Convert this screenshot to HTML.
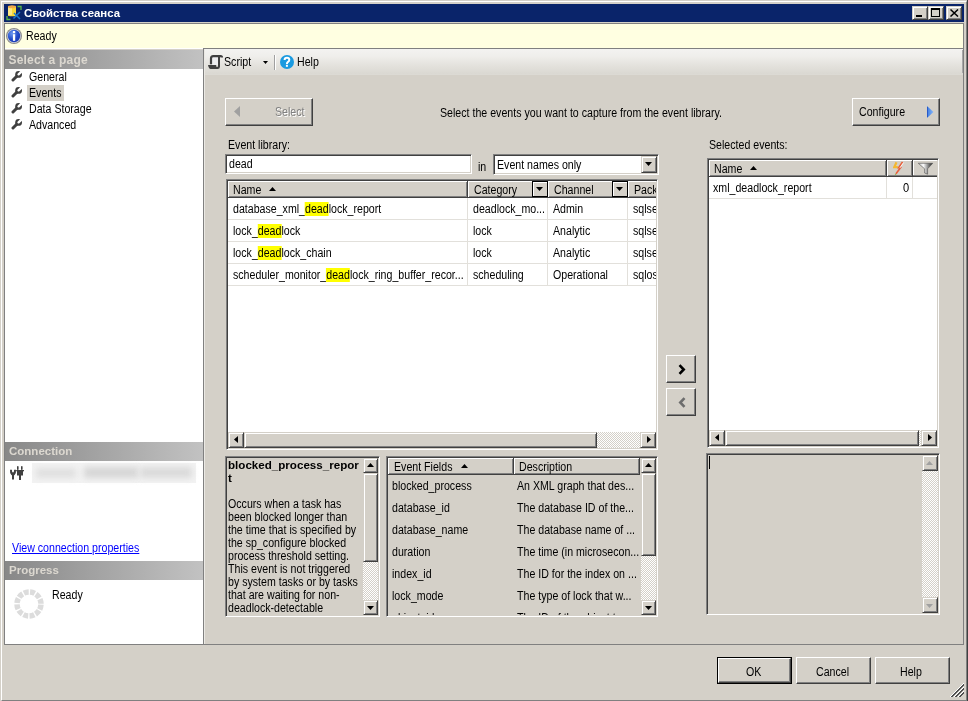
<!DOCTYPE html>
<html><head><meta charset="utf-8">
<style>
*{margin:0;padding:0;box-sizing:border-box}
html,body{width:968px;height:701px;overflow:hidden;background:#d4d0c8;font-family:"Liberation Sans",sans-serif;font-size:10.6px;color:#000}
.a{position:absolute}
.t{position:absolute;white-space:nowrap;line-height:13px;font-size:12px;transform:translate(-1px,1px) scaleX(0.885);transform-origin:0 0}
.nt{transform:none}
.raised{position:absolute;background:#d4d0c8;border:1px solid;border-color:#fff #404040 #404040 #fff;box-shadow:inset -1px -1px #808080}
.raised2{position:absolute;background:#d4d0c8;border:1px solid;border-color:#d4d0c8 #404040 #404040 #d4d0c8;box-shadow:inset 1px 1px #fff,inset -1px -1px #808080}
.sunken{position:absolute;border:1px solid;border-color:#808080 #fff #fff #808080;box-shadow:inset 1px 1px #404040,inset -1px -1px #d4d0c8}
.hdr{position:absolute;background:linear-gradient(to right,#888888,#c2c2c2);color:#dcd8d0;font-weight:bold;font-size:11px;line-height:18px;padding-left:4px;white-space:nowrap}
.checker{background-color:#d4d0c8;background-image:repeating-conic-gradient(#fff 0 25%,#d4d0c8 0 50%);background-size:2px 2px}
.hc{position:absolute;background:#d4d0c8;border-right:1px solid #404040;border-bottom:1px solid #404040;box-shadow:inset 1px 1px #fff,inset -1px -1px #808080}
.yl{background:#ffff00}
</style></head><body><div class="a" style="left:0;top:0;width:968px;height:701px;will-change:transform;overflow:hidden">
<!-- window frame -->
<div class="a" style="left:1px;top:1px;width:966px;height:700px;border-left:1px solid #fff;border-top:1px solid #fff;border-right:1px solid #808080;border-bottom:1px solid #808080"></div>
<div class="a" style="left:967px;top:0;width:1px;height:701px;background:#404040"></div>

<!-- title bar -->
<div class="a" style="left:4px;top:4px;width:960px;height:18px;background:#0a246a"></div>
<svg class="a" style="left:6px;top:5px" width="16" height="16" viewBox="0 0 16 16">
  <path d="M1 11v3.5h3.5M11.5 1.5h3.5v3.5" stroke="#5cb848" stroke-width="1.3" fill="none"/>
  <rect x="2" y="1.5" width="8" height="9" fill="#f8d838"/>
  <rect x="2" y="1.5" width="4" height="9" fill="#fce888"/>
  <ellipse cx="6" cy="1.8" rx="4" ry="1.5" fill="#f0a848"/>
  <ellipse cx="6" cy="10.5" rx="4" ry="0.8" fill="#f8d838"/>
  <path d="M7.5 13.5l6.5-6.5M8 8l6 6" stroke="#1a78d0" stroke-width="1.5"/>
</svg>
<div class="t nt" style="left:24px;top:7px;color:#fff;font-weight:bold;font-size:11.4px">Свойства сеанса</div>
<div class="raised2" style="left:912px;top:6px;width:16px;height:14px"><div class="a" style="left:3px;top:8px;width:6px;height:2px;background:#000"></div></div>
<div class="raised2" style="left:928px;top:6px;width:16px;height:14px"><div class="a" style="left:2px;top:1px;width:9px;height:9px;border:1px solid #000;border-top-width:2px"></div></div>
<div class="raised2" style="left:946px;top:6px;width:16px;height:14px"><svg class="a" style="left:3px;top:2px" width="9" height="8" viewBox="0 0 9 8"><path d="M0.5 0.5L8 7.5M8 0.5L0.5 7.5" stroke="#000" stroke-width="1.5"/></svg></div>

<!-- info bar -->
<div class="a" style="left:4px;top:23px;width:960px;height:26px;background:#ffffe1;border:1px solid #808080"></div>
<svg class="a" style="left:6px;top:28px" width="16" height="16" viewBox="0 0 16 16">
  <defs><radialGradient id="ig" cx="0.35" cy="0.3" r="0.8"><stop offset="0" stop-color="#6a98f0"/><stop offset="0.6" stop-color="#1f48c8"/><stop offset="1" stop-color="#1838b0"/></radialGradient></defs>
  <circle cx="8" cy="8" r="8" fill="#8a8a8a"/>
  <circle cx="8" cy="8" r="6.9" fill="#d0d4e0"/>
  <circle cx="8" cy="8" r="6.2" fill="url(#ig)"/>
  <rect x="6.9" y="6.2" width="2.3" height="6.6" fill="#fff"/>
  <rect x="6.9" y="3" width="2.3" height="2.2" fill="#fff"/>
</svg>
<div class="t" style="left:27px;top:29px">Ready</div>

<!-- LEFT PANEL -->
<div class="a" style="left:4px;top:48px;width:200px;height:597px;background:#fff;border-left:1px solid #808080;border-right:1px solid #808080;border-bottom:1px solid #808080"></div>
<div class="a" style="left:5px;top:49px;width:198px;height:1px;background:#d4d0c8"></div>
<div class="hdr" style="left:5px;top:50px;width:198px;height:19px;line-height:19px;font-size:12px;letter-spacing:0.2px;padding-left:3.5px;padding-top:1px;line-height:18px">Select a page</div>
<svg width="0" height="0" style="position:absolute"><defs>
<g id="wr"><path d="M2 9L6.5 4.5" stroke="#404040" stroke-width="3" stroke-linecap="round"/><circle cx="7.6" cy="3.4" r="3.4" fill="#404040"/><path d="M7.6 3.4L11.5 -0.5" stroke="#fff" stroke-width="2.3" stroke-linecap="round"/></g>
</defs></svg>
<svg class="a" style="left:11px;top:71px" width="11" height="11" viewBox="0 0 11 11"><use href="#wr"/></svg>
<svg class="a" style="left:11px;top:87px" width="11" height="11" viewBox="0 0 11 11"><use href="#wr"/></svg>
<svg class="a" style="left:11px;top:103px" width="11" height="11" viewBox="0 0 11 11"><use href="#wr"/></svg>
<svg class="a" style="left:11px;top:119px" width="11" height="11" viewBox="0 0 11 11"><use href="#wr"/></svg>
<div class="t" style="left:30px;top:70px">General</div>
<div class="a" style="left:27px;top:85px;width:37px;height:16px;background:#d4d0c8"></div>
<div class="t" style="left:30px;top:86px">Events</div>
<div class="t" style="left:30px;top:102px">Data Storage</div>
<div class="t" style="left:30px;top:118px">Advanced</div>

<!-- connection -->
<div class="hdr" style="left:5px;top:442px;width:198px;height:19px;line-height:19px;font-size:11.5px">Connection</div>
<svg class="a" style="left:6px;top:460px" width="24" height="24" viewBox="0 0 24 24" fill="#404040">
  <path d="M4 9.8L5.9 9.8L6.2 12.2H7.8L8.1 9.8L10 9.8Q10.4 13.5 8.6 15Q7 16.2 5.4 15Q3.6 13.5 4 9.8Z"/>
  <rect x="6" y="15" width="2" height="4.5"/>
  <rect x="11" y="6" width="1.6" height="4" rx="0.8"/>
  <rect x="15" y="6" width="1.6" height="4" rx="0.8"/>
  <rect x="10.2" y="10" width="7.8" height="1.3"/>
  <rect x="11" y="10" width="6" height="5.5"/>
  <rect x="13" y="15" width="2" height="5"/>
</svg>
<div class="a" style="left:32px;top:463px;width:164px;height:20px;background:#f3f3f3"></div>
<div class="a" style="left:36px;top:468px;width:40px;height:10px;background:#e0e0e0;filter:blur(3px)"></div>
<div class="a" style="left:84px;top:467px;width:54px;height:11px;background:#d6d6d6;filter:blur(3px)"></div>
<div class="a" style="left:140px;top:467px;width:52px;height:11px;background:#dadada;filter:blur(3px)"></div>
<div class="t" style="left:13px;top:541px;color:#0000ff;text-decoration:underline">View connection properties</div>

<!-- progress -->
<div class="hdr" style="left:5px;top:561px;width:198px;height:19px;line-height:19px;font-size:11.5px">Progress</div>
<svg class="a" style="left:14px;top:589px" width="30" height="30" viewBox="-15 -15 30 30">
  <g stroke="#dcdcdc" stroke-width="5.5" stroke-dasharray="4.9 1.383" fill="none"><circle r="12" transform="rotate(3.3)"/></g>
</svg>
<div class="t" style="left:53px;top:588px">Ready</div>

<!-- MAIN PANEL -->
<div class="a" style="left:203px;top:48px;width:761px;height:597px;border-left:1px solid #808080;border-right:1px solid #808080;border-bottom:1px solid #808080"></div>
<div class="a" style="left:204px;top:49px;width:759px;height:25px;background:linear-gradient(to bottom,#f3f3f1 0%,#efeeeb 30%,#e4e2dd 65%,#dad8d2 100%)"></div><div class="a" style="left:204px;top:74px;width:759px;height:1px;background:#dcdad4"></div><div class="a" style="left:962px;top:50px;width:1px;height:23px;background:#a8a8a8"></div>
<div class="a" style="left:204px;top:49px;width:1px;height:595px;background:#ebe9e4"></div>

<!-- toolbar -->
<svg class="a" style="left:208px;top:54px" width="16" height="16" viewBox="0 0 16 16">
  <rect x="4" y="3" width="6" height="8" fill="#eeeef0"/>
  <path d="M3 10.2V4.5Q3 2.2 5.2 2.2H12.6Q14 2.2 14 3.6" stroke="#404040" stroke-width="2.2" fill="none"/>
  <path d="M11 2.5V12.5" stroke="#404040" stroke-width="2"/>
  <path d="M0 11H8.2V12.8H10V11.5H12V12.5Q12 15 9.6 15H2.6Q0.8 15 0 11Z" fill="#404040"/>
</svg>
<div class="t" style="left:225px;top:55px">Script</div>
<svg class="a" style="left:263px;top:61px" width="5" height="3" viewBox="0 0 5 3"><path d="M0 0h5L2.5 3z" fill="#000"/></svg>
<div class="a" style="left:274px;top:55px;width:1px;height:15px;background:#a0a0a0"></div>
<div class="a" style="left:275px;top:55px;width:1px;height:15px;background:#fff"></div>
<svg class="a" style="left:280px;top:55px" width="14" height="14" viewBox="0 0 14 14">
  <circle cx="7" cy="7" r="7" fill="#1a9ae0"/>
  <path d="M4.6 5Q4.6 2.7 7 2.7Q9.3 2.7 9.3 4.7Q9.3 6 8 6.8Q6.9 7.5 6.9 9" stroke="#fff" stroke-width="2" fill="none"/>
  <rect x="5.9" y="9.8" width="2" height="2" fill="#fff"/>
</svg>
<div class="t" style="left:298px;top:55px">Help</div>

<!-- select button -->
<div class="raised" style="left:225px;top:98px;width:88px;height:28px"></div>
<svg class="a" style="left:234px;top:106px" width="6" height="11" viewBox="0 0 6 11"><path d="M6 0v11L0 5.5z" fill="#a0a0a0"/></svg>
<div class="t" style="left:277px;top:106px;color:#fff">Select</div>
<div class="t" style="left:276px;top:105px;color:#808080">Select</div>
<div class="t" style="left:441px;top:106px">Select the events you want to capture from the event library.</div>

<!-- configure -->
<div class="raised" style="left:852px;top:98px;width:88px;height:28px"></div>
<div class="t" style="left:860px;top:105px">Configure</div>
<svg class="a" style="left:927px;top:106px" width="7" height="12" viewBox="0 0 7 12"><defs><linearGradient id="bg1" x1="0" x2="1"><stop offset="0" stop-color="#3a7ae0"/><stop offset="1" stop-color="#8ab8f8"/></linearGradient></defs><path d="M0 0l6.5 6L0 12z" fill="url(#bg1)"/><path d="M0.5 1v10" stroke="#2a5ac8" stroke-width="1"/></svg>

<div class="t" style="left:229px;top:138px">Event library:</div>
<div class="sunken" style="left:225px;top:154px;width:247px;height:20px;background:#fff"></div>
<div class="t" style="left:230px;top:157px">dead</div>
<div class="t" style="left:479px;top:160px">in</div>
<div class="sunken" style="left:493px;top:154px;width:166px;height:21px;background:#fff"></div>
<div class="t" style="left:498px;top:158px">Event names only</div>
<div class="raised2" style="left:641px;top:156px;width:16px;height:17px"></div><svg class="a" style="left:645px;top:162px" width="7" height="4" viewBox="0 0 7 4"><path d="M0 0h7L3.5 4z" fill="#000"/></svg>
<div class="t" style="left:710px;top:138px">Selected events:</div>

<!-- EVENT LIBRARY GRID -->
<div class="sunken" style="left:226px;top:179px;width:432px;height:271px;background:#fff"></div>
<div class="a" style="left:228px;top:181px;width:428px;height:251px;overflow:hidden">
<div class="hc" style="left:0px;top:0px;width:240px;height:17px"></div><div class="hc" style="left:240px;top:0px;width:80px;height:17px"></div><div class="hc" style="left:320px;top:0px;width:80px;height:17px"></div><div class="hc" style="left:400px;top:0px;width:80px;height:17px"></div><div class="t" style="left:6px;top:2px">Name</div><svg class="a" style="left:41px;top:6px" width="7" height="4" viewBox="0 0 7 4"><path d="M0 4h7L3.5 0z" fill="#000"/></svg><div class="t" style="left:247px;top:2px">Category</div><div class="t" style="left:327px;top:2px">Channel</div><div class="t" style="left:407px;top:2px">Package</div>
<div class="a" style="left:304px;top:0px;width:16px;height:16px;border:1px solid #000;background:#d4d0c8;box-shadow:inset 1px 1px #fff"></div><svg class="a" style="left:308px;top:6px" width="7" height="4" viewBox="0 0 7 4"><path d="M0 0h7L3.5 4z" fill="#000"/></svg><div class="a" style="left:384px;top:0px;width:16px;height:16px;border:1px solid #000;background:#d4d0c8;box-shadow:inset 1px 1px #fff"></div><svg class="a" style="left:388px;top:6px" width="7" height="4" viewBox="0 0 7 4"><path d="M0 0h7L3.5 4z" fill="#000"/></svg>
<div class="a" style="left:0;top:38px;width:430px;height:1px;background:#e2e0db"></div><div class="a" style="left:239px;top:17px;width:1px;height:22px;background:#e2e0db"></div><div class="a" style="left:319px;top:17px;width:1px;height:22px;background:#e2e0db"></div><div class="a" style="left:399px;top:17px;width:1px;height:22px;background:#e2e0db"></div><div class="t" style="left:6px;top:21px">database_xml_<span class="yl">dead</span>lock_report</div><div class="t" style="left:246px;top:21px">deadlock_mo...</div><div class="t" style="left:326px;top:21px">Admin</div><div class="t" style="left:406px;top:21px">sqlse</div>
<div class="a" style="left:0;top:60px;width:430px;height:1px;background:#e2e0db"></div><div class="a" style="left:239px;top:39px;width:1px;height:22px;background:#e2e0db"></div><div class="a" style="left:319px;top:39px;width:1px;height:22px;background:#e2e0db"></div><div class="a" style="left:399px;top:39px;width:1px;height:22px;background:#e2e0db"></div><div class="t" style="left:6px;top:43px">lock_<span class="yl">dead</span>lock</div><div class="t" style="left:246px;top:43px">lock</div><div class="t" style="left:326px;top:43px">Analytic</div><div class="t" style="left:406px;top:43px">sqlse</div>
<div class="a" style="left:0;top:82px;width:430px;height:1px;background:#e2e0db"></div><div class="a" style="left:239px;top:61px;width:1px;height:22px;background:#e2e0db"></div><div class="a" style="left:319px;top:61px;width:1px;height:22px;background:#e2e0db"></div><div class="a" style="left:399px;top:61px;width:1px;height:22px;background:#e2e0db"></div><div class="t" style="left:6px;top:65px">lock_<span class="yl">dead</span>lock_chain</div><div class="t" style="left:246px;top:65px">lock</div><div class="t" style="left:326px;top:65px">Analytic</div><div class="t" style="left:406px;top:65px">sqlse</div>
<div class="a" style="left:0;top:104px;width:430px;height:1px;background:#e2e0db"></div><div class="a" style="left:239px;top:83px;width:1px;height:22px;background:#e2e0db"></div><div class="a" style="left:319px;top:83px;width:1px;height:22px;background:#e2e0db"></div><div class="a" style="left:399px;top:83px;width:1px;height:22px;background:#e2e0db"></div><div class="t" style="left:6px;top:87px">scheduler_monitor_<span class="yl">dead</span>lock_ring_buffer_recor...</div><div class="t" style="left:246px;top:87px">scheduling</div><div class="t" style="left:326px;top:87px">Operational</div><div class="t" style="left:406px;top:87px">sqlos</div>
</div>
<div class="a checker" style="left:228px;top:432px;width:428px;height:16px"></div><div class="raised2" style="left:228px;top:432px;width:16px;height:16px"></div><svg class="a" style="left:234px;top:436px" width="4" height="7" viewBox="0 0 4 7"><path d="M4 0v7L0 3.5z" fill="#000"/></svg><div class="raised2" style="left:244px;top:432px;width:353px;height:16px"></div><div class="raised2" style="left:640px;top:432px;width:16px;height:16px"></div><svg class="a" style="left:647px;top:436px" width="4" height="7" viewBox="0 0 4 7"><path d="M0 0v7L4 3.5z" fill="#000"/></svg>
<div class="raised" style="left:666px;top:355px;width:30px;height:28px"></div>
<svg class="a" style="left:678px;top:364px" width="8" height="11" viewBox="0 0 8 11"><path d="M1.5 1.2l4.2 4.3-4.2 4.3" stroke="#000" stroke-width="2.6" fill="none"/></svg>
<div class="raised" style="left:666px;top:388px;width:30px;height:28px"></div>
<svg class="a" style="left:678px;top:397px" width="8" height="11" viewBox="0 0 8 11"><path d="M6.5 1.2L2.3 5.5l4.2 4.3" stroke="#6d6d6d" stroke-width="2.6" fill="none"/></svg>

<!-- SELECTED EVENTS GRID -->
<div class="sunken" style="left:707px;top:158px;width:232px;height:290px;background:#fff"></div>
<div class="hc" style="left:709px;top:160px;width:178px;height:17px"></div><div class="hc" style="left:887px;top:160px;width:26px;height:17px"></div><div class="a" style="left:913px;top:160px;width:24px;height:17px;background:#d4d0c8;box-shadow:inset 1px 1px #fff;border-bottom:1px solid #404040"></div><div class="a" style="left:913px;top:175px;width:24px;height:1px;background:#808080"></div><div class="t" style="left:715px;top:162px">Name</div><svg class="a" style="left:750px;top:166px" width="7" height="4" viewBox="0 0 7 4"><path d="M0 4h7L3.5 0z" fill="#000"/></svg>
<svg class="a" style="left:893px;top:161px" width="12" height="14" viewBox="0 0 12 14">
  <path d="M3.5 1.2L1.2 6.2H4.8" stroke="#f4b830" stroke-width="2.2" fill="none"/>
  <path d="M9.6 1L5.6 6.6H7.6L3 12.8" stroke="#e8603c" stroke-width="1.6" fill="none"/>
  <path d="M10.6 1.6L6.8 7" stroke="#fff" stroke-width="0.9" opacity="0.9"/>
  <path d="M3 12.8L2.2 13.6" stroke="#90b040" stroke-width="1.2"/>
</svg>
<svg class="a" style="left:918px;top:162px" width="15" height="13" viewBox="0 0 15 13">
  <defs><linearGradient id="fg" x1="0" x2="1"><stop offset="0" stop-color="#c8c8c8"/><stop offset="0.35" stop-color="#fafafa"/><stop offset="0.75" stop-color="#707070"/><stop offset="1" stop-color="#202020"/></linearGradient></defs>
  <path d="M0.3 1.3H14.7L9.6 6.8V12.2L6.6 11V6.8Z" fill="url(#fg)" stroke="#505050" stroke-width="0.6"/>
</svg>
<div class="a" style="left:709px;top:198px;width:228px;height:1px;background:#e2e0db"></div><div class="a" style="left:886px;top:177px;width:1px;height:21px;background:#e2e0db"></div><div class="a" style="left:912px;top:177px;width:1px;height:21px;background:#e2e0db"></div><div class="t" style="left:714px;top:181px">xml_deadlock_report</div><div class="t" style="left:904px;top:181px;font-size:12.5px">0</div>
<div class="a checker" style="left:709px;top:430px;width:228px;height:16px"></div><div class="raised2" style="left:709px;top:430px;width:16px;height:16px"></div><svg class="a" style="left:715px;top:434px" width="4" height="7" viewBox="0 0 4 7"><path d="M4 0v7L0 3.5z" fill="#000"/></svg><div class="raised2" style="left:725px;top:430px;width:194px;height:16px"></div><div class="raised2" style="left:921px;top:430px;width:16px;height:16px"></div><svg class="a" style="left:928px;top:434px" width="4" height="7" viewBox="0 0 4 7"><path d="M0 0v7L4 3.5z" fill="#000"/></svg>
<!-- DESCRIPTION BOX -->
<div class="sunken" style="left:225px;top:456px;width:155px;height:161px;background:#d4d0c8"></div><div class="a" style="left:227px;top:458px;width:136px;height:157px;overflow:hidden"><div class="t nt" style="left:1px;top:0px;font-weight:bold;font-size:11.6px;line-height:13px">blocked_process_repor<br>t</div><div class="t" style="left:2px;top:39px;line-height:13px">Occurs when a task has<br>been blocked longer than<br>the time that is specified by<br>the sp_configure blocked<br>process threshold setting.<br>This event is not triggered<br>by system tasks or by tasks<br>that are waiting for non-<br>deadlock-detectable</div></div>
<div class="a checker" style="left:363px;top:458px;width:15px;height:157px"></div><div class="raised2" style="left:363px;top:458px;width:15px;height:15px"></div><svg class="a" style="left:367px;top:463px" width="7" height="4" viewBox="0 0 7 4"><path d="M0 4h7L3.5 0z" fill="#000"/></svg><div class="raised2" style="left:363px;top:473px;width:15px;height:89px"></div><div class="raised2" style="left:363px;top:600px;width:15px;height:15px"></div><svg class="a" style="left:367px;top:606px" width="7" height="4" viewBox="0 0 7 4"><path d="M0 0h7L3.5 4z" fill="#000"/></svg>
<!-- EVENT FIELDS -->
<div class="sunken" style="left:386px;top:456px;width:272px;height:161px;background:#d4d0c8"></div><div class="a" style="left:388px;top:458px;width:253px;height:157px;overflow:hidden"><div class="hc" style="left:0px;top:0px;width:126px;height:17px"></div><div class="hc" style="left:126px;top:0px;width:126px;height:17px"></div><div class="t" style="left:7px;top:2px">Event Fields</div><svg class="a" style="left:73px;top:6px" width="7" height="4" viewBox="0 0 7 4"><path d="M0 4h7L3.5 0z" fill="#000"/></svg><div class="t" style="left:132px;top:2px">Description</div><div class="t" style="left:5px;top:21px">blocked_process</div><div class="t" style="left:130px;top:21px">An XML graph that des...</div><div class="t" style="left:5px;top:43px">database_id</div><div class="t" style="left:130px;top:43px">The database ID of the...</div><div class="t" style="left:5px;top:65px">database_name</div><div class="t" style="left:130px;top:65px">The database name of ...</div><div class="t" style="left:5px;top:87px">duration</div><div class="t" style="left:130px;top:87px">The time (in microsecon...</div><div class="t" style="left:5px;top:109px">index_id</div><div class="t" style="left:130px;top:109px">The ID for the index on ...</div><div class="t" style="left:5px;top:131px">lock_mode</div><div class="t" style="left:130px;top:131px">The type of lock that w...</div><div class="t" style="left:5px;top:153px">object_id</div><div class="t" style="left:130px;top:153px">The ID of the object t...</div></div>
<div class="a checker" style="left:641px;top:458px;width:15px;height:157px"></div><div class="raised2" style="left:641px;top:458px;width:15px;height:15px"></div><svg class="a" style="left:645px;top:463px" width="7" height="4" viewBox="0 0 7 4"><path d="M0 4h7L3.5 0z" fill="#000"/></svg><div class="raised2" style="left:641px;top:473px;width:15px;height:83px"></div><div class="raised2" style="left:641px;top:600px;width:15px;height:15px"></div><svg class="a" style="left:645px;top:606px" width="7" height="4" viewBox="0 0 7 4"><path d="M0 0h7L3.5 4z" fill="#000"/></svg>
<!-- RIGHT DESC -->
<div class="sunken" style="left:706px;top:453px;width:234px;height:162px;background:#d4d0c8"></div><div class="a" style="left:709px;top:456px;width:1px;height:13px;background:#000"></div><div class="a checker" style="left:922px;top:455px;width:16px;height:158px"></div><div class="raised2" style="left:922px;top:455px;width:16px;height:16px"></div><svg class="a" style="left:926px;top:461px" width="7" height="4" viewBox="0 0 7 4"><path d="M0 4h7L3.5 0z" fill="#a0a0a0"/></svg><div class="raised2" style="left:922px;top:597px;width:16px;height:16px"></div><svg class="a" style="left:926px;top:604px" width="7" height="4" viewBox="0 0 7 4"><path d="M0 0h7L3.5 4z" fill="#a0a0a0"/></svg>
<!-- BOTTOM BUTTONS -->
<div class="a" style="left:717px;top:657px;width:75px;height:27px;border:1px solid #000"><div class="raised" style="left:0;top:0;width:73px;height:25px"></div></div>
<div class="t" style="left:747px;top:665px">OK</div>
<div class="raised" style="left:796px;top:657px;width:75px;height:27px"></div>
<div class="t" style="left:817px;top:665px">Cancel</div>
<div class="raised" style="left:875px;top:657px;width:75px;height:27px"></div>
<div class="t" style="left:901px;top:665px">Help</div>
<svg class="a" style="left:950px;top:683px" width="14" height="14" viewBox="0 0 14 14" shape-rendering="crispEdges"><path d="M0 13h1v1h-1zM1 12h1v1h-1zM2 11h1v1h-1zM3 10h1v1h-1zM4 9h1v1h-1zM5 8h1v1h-1zM6 7h1v1h-1zM7 6h1v1h-1zM8 5h1v1h-1zM9 4h1v1h-1zM10 3h1v1h-1zM11 2h1v1h-1zM12 1h1v1h-1zM13 0h1v1h-1zM4 13h1v1h-1zM5 12h1v1h-1zM6 11h1v1h-1zM7 10h1v1h-1zM8 9h1v1h-1zM9 8h1v1h-1zM10 7h1v1h-1zM11 6h1v1h-1zM12 5h1v1h-1zM13 4h1v1h-1zM8 13h1v1h-1zM9 12h1v1h-1zM10 11h1v1h-1zM11 10h1v1h-1zM12 9h1v1h-1zM13 8h1v1h-1z" fill="#fff"/><path d="M1 13h1v1h-1zM2 12h1v1h-1zM2 13h1v1h-1zM3 11h1v1h-1zM3 12h1v1h-1zM4 10h1v1h-1zM4 11h1v1h-1zM5 9h1v1h-1zM5 10h1v1h-1zM6 8h1v1h-1zM6 9h1v1h-1zM7 7h1v1h-1zM7 8h1v1h-1zM8 6h1v1h-1zM8 7h1v1h-1zM9 5h1v1h-1zM9 6h1v1h-1zM10 4h1v1h-1zM10 5h1v1h-1zM11 3h1v1h-1zM11 4h1v1h-1zM12 2h1v1h-1zM12 3h1v1h-1zM13 1h1v1h-1zM13 2h1v1h-1zM5 13h1v1h-1zM6 12h1v1h-1zM6 13h1v1h-1zM7 11h1v1h-1zM7 12h1v1h-1zM8 10h1v1h-1zM8 11h1v1h-1zM9 9h1v1h-1zM9 10h1v1h-1zM10 8h1v1h-1zM10 9h1v1h-1zM11 7h1v1h-1zM11 8h1v1h-1zM12 6h1v1h-1zM12 7h1v1h-1zM13 5h1v1h-1zM13 6h1v1h-1zM9 13h1v1h-1zM10 12h1v1h-1zM10 13h1v1h-1zM11 11h1v1h-1zM11 12h1v1h-1zM12 10h1v1h-1zM12 11h1v1h-1zM13 9h1v1h-1zM13 10h1v1h-1z" fill="#505050"/></svg>
</div></body></html>
